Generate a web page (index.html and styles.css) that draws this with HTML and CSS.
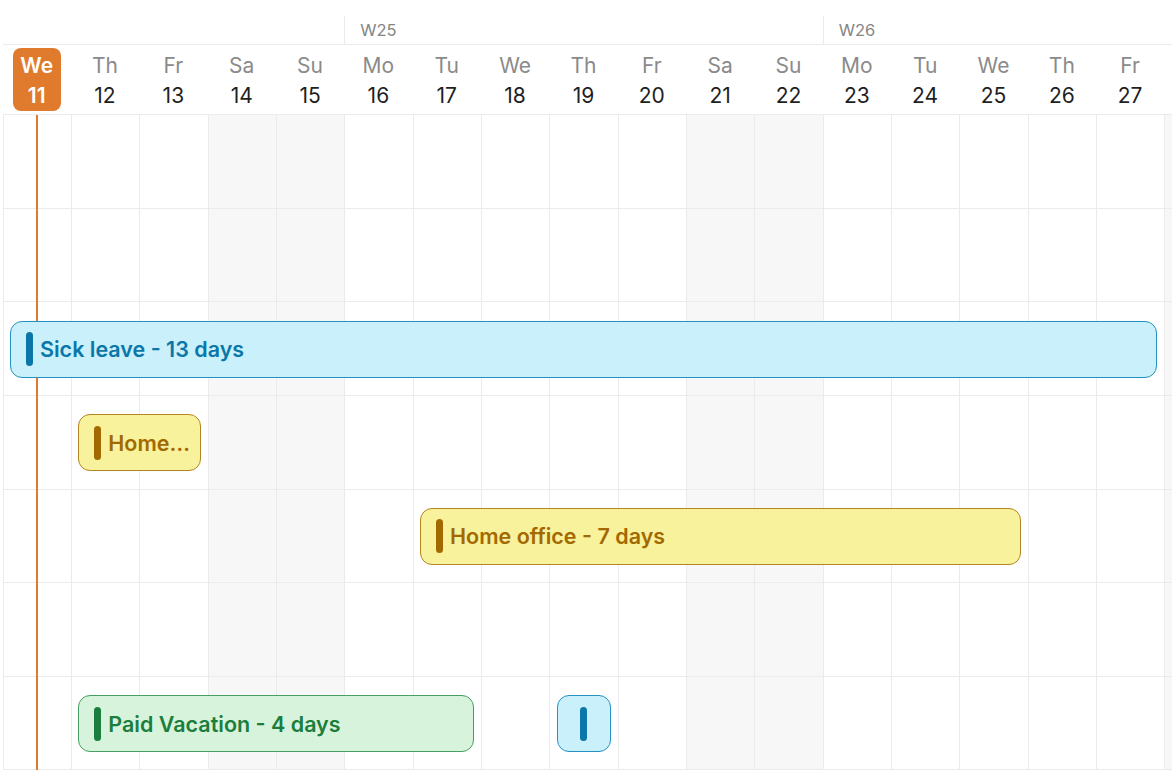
FILE: index.html
```html
<!DOCTYPE html>
<html lang="en">
<head>
    <meta charset="UTF-8">
    <meta name="viewport" content="width=device-width, initial-scale=1.0">
    <title>Absence planner</title>
    <link rel="stylesheet" href="styles.css">
</head>
<body>
    <div class="timeline">
        <div class="weeks">
            <div class="week w24"></div>
            <div class="week w25">W25</div>
            <div class="week w26">W26</div>
        </div>

        <div class="days">
            <div class="day today"><span class="dname">We</span><span class="dnum">11</span></div>
            <div class="day"><span class="dname">Th</span><span class="dnum">12</span></div>
            <div class="day"><span class="dname">Fr</span><span class="dnum">13</span></div>
            <div class="day"><span class="dname">Sa</span><span class="dnum">14</span></div>
            <div class="day"><span class="dname">Su</span><span class="dnum">15</span></div>
            <div class="day"><span class="dname">Mo</span><span class="dnum">16</span></div>
            <div class="day"><span class="dname">Tu</span><span class="dnum">17</span></div>
            <div class="day"><span class="dname">We</span><span class="dnum">18</span></div>
            <div class="day"><span class="dname">Th</span><span class="dnum">19</span></div>
            <div class="day"><span class="dname">Fr</span><span class="dnum">20</span></div>
            <div class="day"><span class="dname">Sa</span><span class="dnum">21</span></div>
            <div class="day"><span class="dname">Su</span><span class="dnum">22</span></div>
            <div class="day"><span class="dname">Mo</span><span class="dnum">23</span></div>
            <div class="day"><span class="dname">Tu</span><span class="dnum">24</span></div>
            <div class="day"><span class="dname">We</span><span class="dnum">25</span></div>
            <div class="day"><span class="dname">Th</span><span class="dnum">26</span></div>
            <div class="day"><span class="dname">Fr</span><span class="dnum">27</span></div>
            <!-- next day (Sa 28) is scrolled out of view -->
            <div class="day"></div>
        </div>

        <div class="board">
            <div class="cols">
                <div class="col"></div>
                <div class="col"></div>
                <div class="col"></div>
                <div class="col weekend"></div>
                <div class="col weekend"></div>
                <div class="col"></div>
                <div class="col"></div>
                <div class="col"></div>
                <div class="col"></div>
                <div class="col"></div>
                <div class="col weekend"></div>
                <div class="col weekend"></div>
                <div class="col"></div>
                <div class="col"></div>
                <div class="col"></div>
                <div class="col"></div>
                <div class="col"></div>
                <div class="col weekend"></div>
            </div>

            <div class="rows">
                <div class="row"></div>
                <div class="row"></div>
                <div class="row"></div>
                <div class="row"></div>
                <div class="row"></div>
                <div class="row"></div>
                <div class="row"></div>
            </div>

            <div class="bars">
                <div class="now"></div>
                <div class="bar sick" id="sick-leave"><span class="mark"></span><span class="label">Sick leave - 13 days</span></div>
                <div class="bar office" id="home-short"><span class="mark"></span><span class="label">Home office - 2 days</span></div>
                <div class="bar office" id="home-long"><span class="mark"></span><span class="label">Home office - 7 days</span></div>
                <div class="bar vacation" id="vacation"><span class="mark"></span><span class="label">Paid Vacation - 4 days</span></div>
                <div class="bar sick compact" id="sick-short"><span class="mark"></span></div>
            </div>
        </div>
    </div>
</body>
</html>
```

FILE: styles.css
```css
body {
    margin: 0;
    padding: 0;
    font-family: Inter, "Noto Sans", Arial, sans-serif;
    background-color: #ffffff;
    overflow: hidden;
}
.timeline {
    width: 100%;
    height: 100vh;
    box-sizing: border-box;
    padding-left: 2.5px;
    overflow: hidden;
}
.weeks,
.days,
.bars {
    display: grid;
    grid-template-columns: repeat(18, 68.35px);
}
.weeks,
.days,
.board {
    width: 1230.3px;
}
.weeks {
    height: 44px;
    border-bottom: 1px solid #ebebeb;
}
.week {
    margin-top: 16px;
    padding-left: 15px;
    font-size: 16.5px;
    line-height: 28px;
    color: #858585;
    border-left: 1px solid #ebebeb;
}
.week.w24 {
    grid-column: 1 / span 5;
    border-left: none;
}
.week.w25 {
    grid-column: 6 / span 7;
}
.week.w26 {
    grid-column: 13 / span 6;
}
.days {
    height: 69px;
    border-bottom: 1px solid #ebebeb;
}
.day {
    width: 48px;
    height: 63px;
    margin: 3px auto 0;
    padding-top: 2px;
    box-sizing: border-box;
    display: flex;
    flex-direction: column;
    justify-content: center;
    align-items: center;
    font-size: 21px;
    line-height: 30px;
    border-radius: 8px;
}
.dname {
    color: #8a8a8a;
}
.dnum {
    color: #1f1f1f;
}
.day.today {
    background-color: #e07b2e;
}
.day.today .dname,
.day.today .dnum {
    color: #ffffff;
    font-weight: 600;
}

/* body of the planner: columns, row lines and bars stacked in one cell */
.board {
    display: grid;
    height: 656px;
}
.board > * {
    grid-area: 1 / 1;
}
.cols {
    display: flex;
}
.col {
    flex: none;
    width: 68.35px;
    box-sizing: border-box;
    border-left: 1px solid #ebebeb;
}
.col.weekend {
    background-color: #f7f7f7;
}
.rows {
    display: flex;
    flex-direction: column;
}
.row {
    height: 93.65px;
    box-sizing: border-box;
    border-bottom: 1px solid #ebebeb;
}
.bars {
    grid-template-rows: repeat(7, 93.65px);
}
.now {
    grid-column: 1;
    grid-row: 1 / -1;
    justify-self: center;
    width: 2px;
    margin-left: 1px;
    background-color: #e07b2e;
}
.bar {
    align-self: center;
    height: 57px;
    margin: 0 7px 0 7.5px;
    box-sizing: border-box;
    border: 1px solid;
    border-radius: 12px;
    display: flex;
    align-items: center;
    padding: 0 8px 0 14.5px;
    gap: 7.5px;
    min-width: 0;
    font-size: 21.5px;
    font-weight: 600;
    white-space: nowrap;
}
.mark {
    flex: none;
    width: 7px;
    height: 34px;
    border-radius: 4px;
}
.label {
    overflow: hidden;
    text-overflow: ellipsis;
}
.bar.sick {
    background-color: #c9f0fb;
    border-color: #2590c2;
    color: #0b77a9;
}
.bar.sick .mark {
    background-color: #0b77a9;
}
.bar.office {
    background-color: #f8f29d;
    border-color: #b38520;
    color: #a26900;
}
.bar.office .mark {
    background-color: #a26900;
}
.bar.vacation {
    background-color: #d7f3dc;
    border-color: #43a062;
    color: #1b7e3c;
}
.bar.vacation .mark {
    background-color: #1b7e3c;
}
.bar.compact {
    justify-content: center;
    padding: 0;
}
#sick-leave {
    grid-row: 3;
    grid-column: 1 / span 17;
}
#home-short {
    grid-row: 4;
    grid-column: 2 / span 2;
}
#home-long {
    grid-row: 5;
    grid-column: 7 / span 9;
}
#vacation {
    grid-row: 7;
    grid-column: 2 / span 6;
}
#sick-short {
    grid-row: 7;
    grid-column: 9;
}
```
